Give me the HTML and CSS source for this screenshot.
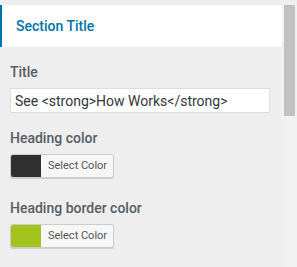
FILE: index.html
```html
<!DOCTYPE html>
<html lang="en">
<head>
    <meta charset="utf-8">
    <title>Section settings</title>
    <link rel="stylesheet" href="styles.css">
</head>
<body>
    <div class="frame">
        <div class="panel">
            <div class="section-head">Section Title</div>

            <div class="fields">
                <div class="field">
                    <label class="field-label">Title</label>
                    <input class="text-input" type="text" value="See <strong>How Works</strong>">
                </div>

                <div class="field field-color">
                    <label class="field-label">Heading color</label>
                    <button class="color-btn" type="button">
                        <span class="swatch swatch-dark"></span>
                        <span class="color-text">Select Color</span>
                    </button>
                </div>

                <div class="field field-color">
                    <label class="field-label">Heading border color</label>
                    <button class="color-btn" type="button">
                        <span class="swatch swatch-green"></span>
                        <span class="color-text">Select Color</span>
                    </button>
                </div>
            </div>

            <div class="section-head"></div>
        </div>

        <div class="scrollbar"><div class="thumb"></div></div>
    </div>
</body>
</html>
```

FILE: styles.css
```css
* { box-sizing: border-box }

html, body {
    margin: 0;
    height: 100%;
    background-color: #eeeeee;
    font-family: Roboto, "Liberation Sans", sans-serif;
}

body { padding-top: 5px }

.frame {
    display: flex;
    height: 262px;
}

.panel {
    flex: 1;
    overflow: hidden;
}

.scrollbar {
    width: 15px;
    flex: none;
    padding: 0 2px;
    background-color: #f1f1f1;
}

.thumb {
    height: 111px;
    background-color: #c1c1c1;
}

.section-head {
    height: 42px;
    background-color: white;
    border-left: 2px solid #0073aa;
    padding-left: 14px;
    font-size: 14px;
    font-weight: 500;
    line-height: 42px;
    color: #0073aa;
}

.fields { padding: 15px 12px 4px 10px }

.field { margin-bottom: 15px }

.field-color { margin-bottom: 20px }

.field-label {
    display: block;
    font-size: 14px;
    font-weight: 500;
    line-height: 20px;
    color: #555d66;
    margin-bottom: 6px;
}

.text-input {
    display: block;
    width: 260px;
    height: 25px;
    border: 1px solid #dddddd;
    background-color: white;
    padding: 0 4px;
    font-family: Roboto, "Liberation Sans", sans-serif;
    font-size: 14px;
    color: #32373c;
    outline: none;
}

.color-btn {
    display: flex;
    align-items: stretch;
    width: 104px;
    height: 24px;
    padding: 0;
    border: 1px solid #cccccc;
    border-radius: 3px;
    background-color: #f7f7f7;
    box-shadow: 0 1px 0 #cccccc;
    overflow: hidden;
    cursor: pointer;
}

.swatch {
    width: 30px;
    flex: none;
}

.swatch-dark { background-color: #2f2f2f }
.swatch-green { background-color: #a2c31c }

.color-text {
    padding-left: 7px;
    font-family: Roboto, "Liberation Sans", sans-serif;
    font-size: 11px;
    line-height: 22px;
    color: #555555;
}
```
